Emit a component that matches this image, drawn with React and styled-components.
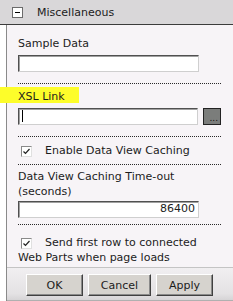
import React from "react";
import styled, { createGlobalStyle } from "styled-components";

const Global = createGlobalStyle`
  html, body {
    margin: 0;
    padding: 0;
    background: #ffffff;
  }
  body {
    font-family: "DejaVu Sans", Verdana, sans-serif;
    font-size: 11px;
    color: #1c1c1c;
  }
`;

const Panel = styled.div`
  width: 233px;
  height: 301px;
  display: flex;
  flex-direction: column;
  overflow: hidden;
`;

const Header = styled.div`
  height: 24px;
  background: #d9d7d9;
  border-bottom: 1px solid #3c3c3c;
  display: flex;
  align-items: center;
  padding-left: 12px;
  gap: 14px;
  font-size: 11px;
  color: #1c1c1c;
`;

const Toggle = styled.span`
  width: 9px;
  height: 9px;
  border: 1px solid #6b6b6b;
  background: #ffffff;
  display: flex;
  align-items: center;
  justify-content: center;
  &::after {
    content: "";
    width: 5px;
    height: 1px;
    background: #000;
  }
`;

const Body = styled.div`
  flex: 1;
  margin-left: 6px;
  border-left: 1px solid #8a8a8a;
  background: #f7f4f7;
  display: flex;
  flex-direction: column;
`;

const Content = styled.div`
  padding: 11px 12px 0 11px;
  display: flex;
  flex-direction: column;
`;

const Section = styled.div`
  display: flex;
  flex-direction: column;
  padding: ${(p) => p.$pad || "0"};
  border-bottom: ${(p) => (p.$last ? "none" : "1px dotted #2a2a2a")};
`;

const Label = styled.div`
  line-height: 15px;
  margin-bottom: ${(p) => p.$gap ?? 4}px;
`;

const Marked = styled.span`
  position: relative;
  z-index: 0;
  &::before {
    content: "";
    position: absolute;
    left: -18px;
    top: -3px;
    width: 79px;
    height: 16px;
    background: #fdfd2a;
    z-index: -1;
  }
`;

const Field = styled.div`
  display: flex;
  align-items: center;
  gap: 5px;
`;

const Input = styled.div`
  box-sizing: border-box;
  width: 181px;
  height: 17px;
  background: #ffffff;
  border-style: solid;
  border-width: 1px;
  border-color: #505050 #cfcfcf #cfcfcf #505050;
  box-shadow: inset 1px 1px 0 #a0a0a0;
  font-size: 11px;
  line-height: 14px;
  padding: 0 3px;
  text-align: ${(p) => (p.$right ? "right" : "left")};
`;

const Caret = styled.span`
  display: inline-block;
  width: 1px;
  height: 12px;
  margin-top: 1px;
  background: #000;
`;

const Browse = styled.div`
  box-sizing: border-box;
  width: 18px;
  height: 17px;
  background: #7b7d7b;
  border: 1px solid #222;
  display: flex;
  align-items: flex-end;
  justify-content: flex-end;
  padding: 0 2px 3px 0;
  font-size: 9px;
  line-height: 6px;
  color: #111;
`;

const CheckRow = styled.div`
  line-height: 15px;
`;

const Box = styled.span`
  box-sizing: border-box;
  display: inline-flex;
  vertical-align: -2px;
  width: 11px;
  height: 11px;
  border-style: solid;
  border-width: 1px;
  border-color: #8a8a8a #e0e0e0 #e0e0e0 #8a8a8a;
  background: #ffffff;
  margin: 0 13px 0 3px;
  svg {
    display: block;
  }
`;

const Footer = styled.div`
  margin-top: auto;
  height: 34px;
  border-top: 1px solid #c4c4c4;
  border-bottom: 1px solid #b0b0b0;
  background: linear-gradient(#f1eff1, #e4e2e4 80%, #d6d4d6);
  display: flex;
  align-items: flex-start;
  padding: 6px 0 0 19px;
  gap: 5px;
  box-sizing: border-box;
`;

const Button = styled.button`
  width: ${(p) => p.$w}px;
  height: 22px;
  background: #d6d3ce;
  border-style: solid;
  border-width: 1px;
  border-color: #ffffff #404040 #404040 #ffffff;
  box-shadow: inset -1px -1px 0 #8a8a8a;
  font-family: "DejaVu Sans", Verdana, sans-serif;
  font-size: 11px;
  color: #1c1c1c;
  padding: 0;
`;

const Check = () => (
  <Box>
    <svg width="9" height="9" viewBox="0 0 9 9">
      <path d="M1.5 4.5 L3.5 6.5 L7.5 2" fill="none" stroke="#222" strokeWidth="1.2" />
    </svg>
  </Box>
);

export default function App() {
  return (
    <Panel>
      <Global />
      <Header>
        <Toggle />
        <span>Miscellaneous</span>
      </Header>
      <Body>
        <Content>
          <Section $pad="0 0 11px">
            <Label>Sample Data</Label>
            <Input />
          </Section>
          <Section $pad="5px 0 11px">
            <Label>
              <Marked>XSL Link</Marked>
            </Label>
            <Field>
              <Input>
                <Caret />
              </Input>
              <Browse>...</Browse>
            </Field>
          </Section>
          <Section $pad="6px 0 6px">
            <CheckRow>
              <Check />
              Enable Data View Caching
            </CheckRow>
          </Section>
          <Section $pad="4px 0 6px">
            <Label $gap={2}>
              Data View Caching Time-out
              <br />
              (seconds)
            </Label>
            <Input $right>86400</Input>
          </Section>
          <Section $pad="10px 0 0" $last>
            <CheckRow>
              <Check />
              Send first row to connected Web Parts when page loads
            </CheckRow>
          </Section>
        </Content>
        <Footer>
          <Button $w={57}>OK</Button>
          <Button $w={63}>Cancel</Button>
          <Button $w={57}>Apply</Button>
        </Footer>
      </Body>
    </Panel>
  );
}
